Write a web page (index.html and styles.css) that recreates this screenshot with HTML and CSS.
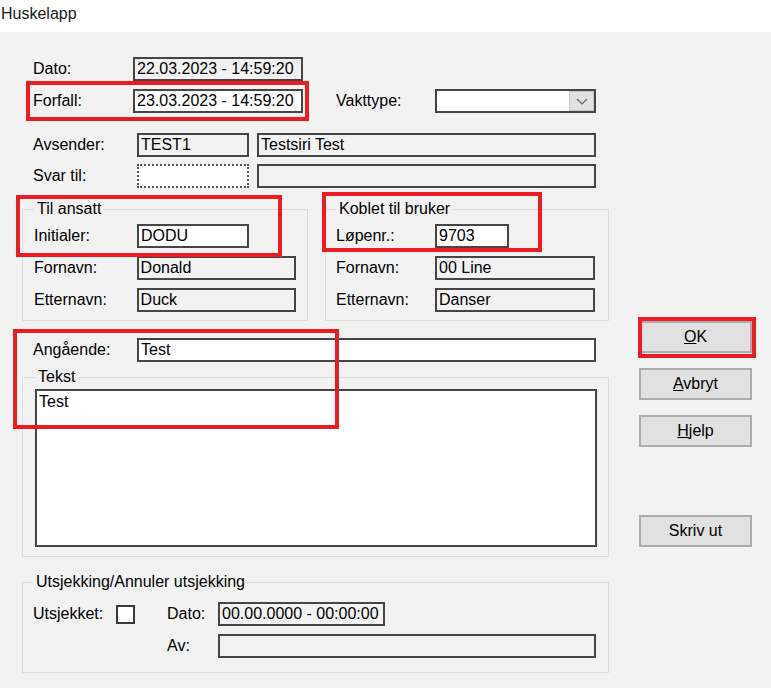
FILE: index.html
```html
<!DOCTYPE html>
<html lang="no">
<head>
    <meta charset="UTF-8">
    <title>Huskelapp</title>
    <link rel="stylesheet" href="styles.css">
</head>
<body>
    <div class="titlebar">Huskelapp</div>

    <div class="dialog">
        <div class="form">
            <div class="top">
                <div class="row">
                    <span class="lbl lbl-top">Dato:</span>
                    <span class="field w-date">22.03.2023 - 14:59:20</span>
                </div>
                <div class="row row-forfall">
                    <span class="lbl lbl-top">Forfall:</span>
                    <span class="field edit w-date">23.03.2023 - 14:59:20</span>
                    <span class="lbl lbl-vakt">Vakttype:</span>
                    <span class="field edit select">
                        <span class="select-btn">
                            <svg width="12" height="7" viewBox="0 0 12 7"><path d="M1 1 L6 6 L11 1" fill="none" stroke="#606060" stroke-width="1.2"/></svg>
                        </span>
                    </span>
                </div>
                <div class="row row-avsender">
                    <span class="lbl lbl-wide">Avsender:</span>
                    <span class="field w-short">TEST1</span>
                    <span class="field w-long">Testsiri Test</span>
                </div>
                <div class="row row-svar">
                    <span class="lbl lbl-wide">Svar til:</span>
                    <span class="field edit focus w-short"></span>
                    <span class="field w-long"></span>
                </div>
            </div>

            <div class="groups">
                <fieldset class="group group-ansatt">
                    <legend>Til ansatt</legend>
                    <div class="row first">
                        <span class="lbl lbl-wide">Initialer:</span>
                        <span class="field edit w-short">DODU</span>
                    </div>
                    <div class="row">
                        <span class="lbl lbl-wide">Fornavn:</span>
                        <span class="field w-name">Donald</span>
                    </div>
                    <div class="row">
                        <span class="lbl lbl-wide">Etternavn:</span>
                        <span class="field w-name">Duck</span>
                    </div>
                </fieldset>
                <fieldset class="group group-bruker">
                    <legend>Koblet til bruker</legend>
                    <div class="row first">
                        <span class="lbl lbl-bruker">Løpenr.:</span>
                        <span class="field edit w-nr">9703</span>
                    </div>
                    <div class="row">
                        <span class="lbl lbl-bruker">Fornavn:</span>
                        <span class="field w-name">00 Line</span>
                    </div>
                    <div class="row">
                        <span class="lbl lbl-bruker">Etternavn:</span>
                        <span class="field w-name">Danser</span>
                    </div>
                </fieldset>
            </div>

            <div class="row row-angaende">
                <span class="lbl lbl-wide">Angående:</span>
                <span class="field edit w-subject">Test</span>
            </div>

            <fieldset class="group group-tekst">
                <legend>Tekst</legend>
                <div class="textarea">Test</div>
            </fieldset>

            <fieldset class="group group-utsjekk">
                <legend>Utsjekking/Annuler utsjekking</legend>
                <div class="utsjekk-grid">
                    <span class="lbl">Utsjekket:</span>
                    <span class="checkbox"></span>
                    <span></span>
                    <span class="lbl">Dato:</span>
                    <span class="field w-utdato">00.00.0000 - 00:00:00</span>

                    <span class="lbl col-av">Av:</span>
                    <span class="field w-av"></span>
                </div>
            </fieldset>
        </div>

        <div class="buttons">
            <button class="btn btn-ok"><u>O</u>K</button>
            <button class="btn"><u>A</u>vbryt</button>
            <button class="btn"><u>H</u>jelp</button>
            <button class="btn btn-print">Skriv ut</button>
        </div>
    </div>

    <!-- red annotation boxes -->
    <div class="mark mark-forfall"></div>
    <div class="mark mark-ansatt"></div>
    <div class="mark mark-bruker"></div>
    <div class="mark mark-angaende"></div>
    <div class="mark mark-ok"></div>
</body>
</html>
```

FILE: styles.css
```css
body {
    margin: 0;
    font-family: 'Liberation Sans', Arial, sans-serif;
    font-size: 16px;
    color: #000;
    background-color: #f2f2f2;
    position: relative;
    width: 771px;
    height: 688px;
    overflow: hidden;
}

.titlebar {
    background-color: #fff;
    height: 32px;
    line-height: 27px;
    padding-left: 1px;
    font-size: 16px;
    color: #1a1a1a;
}

.dialog {
    display: flex;
    padding: 25px 0 0 22px;
    height: 631px;
}

.form {
    width: 587px;
    display: flex;
    flex-direction: column;
}

.top {
    padding-left: 11px;
}

.row {
    display: flex;
    align-items: center;
    height: 24px;
}

.row + .row {
    margin-top: 8px;
}

.row-avsender {
    margin-top: 20px !important;
}

.row-svar {
    margin-top: 7px !important;
}

.lbl {
    white-space: nowrap;
}

.lbl-top { width: 100px; }
.lbl-wide { width: 104px; }
.lbl-bruker { width: 99px; }

.group .lbl-wide { width: 103px; }

.lbl-vakt {
    width: 99px;
    margin-left: 33px;
}

.field {
    box-sizing: border-box;
    height: 24px;
    border: 2px solid #454545;
    background-color: #f2f2f2;
    padding-left: 2px;
    display: flex;
    align-items: center;
    white-space: nowrap;
    overflow: hidden;
}

.field.edit {
    background-color: #fff;
}

.field.focus {
    border: 2px dotted #555;
}

.w-date { width: 170px; }
.w-short { width: 112px; }
.w-long { width: 339px; margin-left: 8px; }
.w-name { width: 160px; }
.w-nr { width: 74px; }
.w-subject { width: 459px; }
.w-utdato { width: 167px; }
.w-av { width: 378px; }

.select {
    width: 161px;
    padding: 0;
    justify-content: flex-end;
}

.select-btn {
    width: 25px;
    height: 100%;
    box-sizing: border-box;
    background-color: #e1e1e1;
    border: 1px solid #c9c9c9;
    display: flex;
    align-items: center;
    justify-content: center;
}

.groups {
    display: flex;
    gap: 17px;
    margin-top: 12px;
}

.group {
    margin: 0;
    min-width: 0;
    border: 1px solid #dcdcdc;
    padding: 0 11px 8px 11px;
}

.group legend {
    padding: 0 3px;
    line-height: 18px;
}

.group .row.first {
    margin-top: 6px;
}

.group-ansatt {
    width: 286px;
    box-sizing: border-box;
}

.group-bruker {
    width: 284px;
    box-sizing: border-box;
    padding-left: 10px;
}

.row-angaende {
    margin-top: 17px;
    padding-left: 11px;
}

.group-tekst {
    margin-top: 6px;
    padding: 0 11px 9px 12px;
}

.textarea {
    margin-top: 3px;
    height: 158px;
    box-sizing: border-box;
    border: 2px solid #454545;
    background-color: #fff;
    padding: 0 2px;
    line-height: 22px;
}

.group-utsjekk {
    margin-top: 16px;
    padding: 0 12px 14px 10px;
}

.utsjekk-grid {
    display: grid;
    grid-template-columns: 83px 19px 32px 51px auto;
    grid-template-rows: 24px 24px;
    row-gap: 8px;
    align-items: center;
    justify-items: start;
    margin-top: 11px;
}

.col-av {
    grid-column: 4;
}

.checkbox {
    width: 19px;
    height: 19px;
    box-sizing: border-box;
    border: 2px solid #3a3a3a;
    background-color: #fff;
}

.buttons {
    display: flex;
    flex-direction: column;
    margin-left: 30px;
    padding-top: 264px;
}

.btn {
    width: 113px;
    height: 32px;
    box-sizing: border-box;
    border: 2px solid #adadad;
    background-color: #e1e1e1;
    font-family: 'Liberation Sans', Arial, sans-serif;
    font-size: 16px;
    color: #000;
    padding: 0;
    margin-bottom: 15px;
}

.btn-print {
    margin-top: 53px;
}

.mark {
    position: absolute;
    box-sizing: border-box;
    border: 4px solid #ed1c24;
}

.mark-forfall { left: 26px; top: 81px; width: 283px; height: 40px; }
.mark-ansatt { left: 16px; top: 195px; width: 266px; height: 62px; }
.mark-bruker { left: 322px; top: 192px; width: 220px; height: 60px; }
.mark-angaende { left: 13px; top: 329px; width: 326px; height: 100px; }
.mark-ok { left: 638px; top: 317px; width: 118px; height: 41px; }
```
